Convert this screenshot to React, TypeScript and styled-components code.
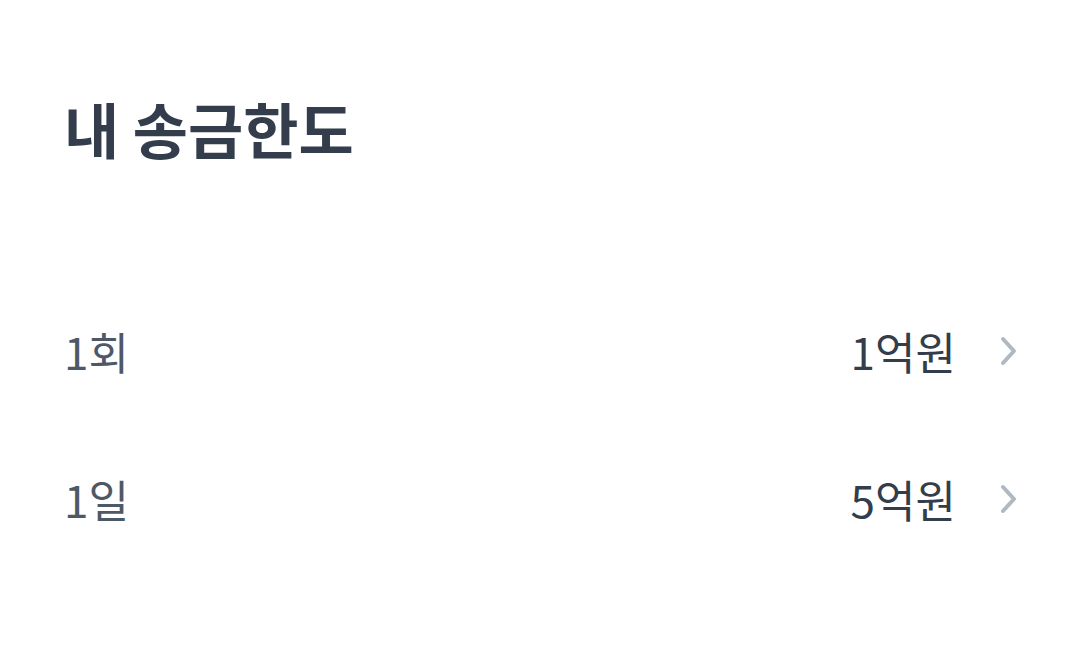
import React from 'react';
import styled, { createGlobalStyle } from 'styled-components';

const GlobalStyle = createGlobalStyle`
  html, body {
    margin: 0;
    padding: 0;
    background: #ffffff;
  }
  body {
    font-family: "Noto Sans CJK KR", "Noto Sans", sans-serif;
    -webkit-font-smoothing: antialiased;
  }
`;

const Page = styled.div`
  width: 1080px;
  height: 653px;
  box-sizing: border-box;
  padding: 88px 60px 0 64px;
  background: #ffffff;
`;

const Title = styled.h1`
  margin: 0;
  font-size: 60px;
  font-weight: 700;
  line-height: 80px;
  color: #333d4b;
  letter-spacing: 0;
`;

const List = styled.ul`
  list-style: none;
  margin: 143px 0 0;
  padding: 0;
  display: flex;
  flex-direction: column;
  gap: 68px;
`;

const Row = styled.li`
  display: flex;
  align-items: center;
  justify-content: space-between;
  height: 80px;
`;

const Label = styled.span`
  font-size: 44px;
  font-weight: 400;
  color: #4e5968;
`;

const Value = styled.span`
  display: flex;
  align-items: center;
  gap: 42px;
  font-size: 44px;
  font-weight: 400;
  color: #333d4b;
`;

const Chevron = () => (
  <svg width="22" height="32" viewBox="0 0 22 32" fill="none">
    <path
      d="M5 4 L16 16 L5 28"
      stroke="#b0b8c1"
      strokeWidth="4"
      strokeLinecap="round"
      strokeLinejoin="round"
    />
  </svg>
);

const limits = [
  { label: '1회', value: '1억원' },
  { label: '1일', value: '5억원' },
];

export default function App() {
  return (
    <>
      <GlobalStyle />
      <Page>
        <Title>내 송금한도</Title>
        <List>
          {limits.map((l) => (
            <Row key={l.label}>
              <Label>{l.label}</Label>
              <Value>
                {l.value}
                <Chevron />
              </Value>
            </Row>
          ))}
        </List>
      </Page>
    </>
  );
}
